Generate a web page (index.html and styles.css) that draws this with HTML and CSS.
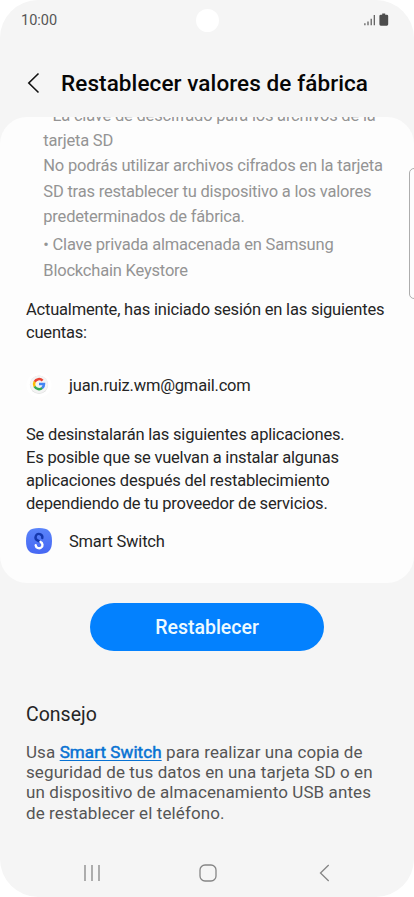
FILE: index.html
```html
<!DOCTYPE html>
<html lang="es">
<head>
<meta charset="utf-8">
<title>Restablecer valores de fábrica</title>
<link rel="stylesheet" href="styles.css">
</head>
<body>
<main class="phone">
  <header class="status">
    <time class="clock">10:00</time>
    <span class="camera"></span>
    <svg class="status-icons" width="26" height="14" viewBox="0 0 26 14">
      <path d="M.9 10.300v2M4 8.600v3.700M7.200 5.800v6.500M10.300 2.100v10.200" stroke="#555" stroke-width="1.200"/>
      <path d="M18.200.5h3v1.200h1.600q1.400 0 1.400 1.400v8.200q0 1.400-1.400 1.400h-6q-1.400 0-1.400-1.400V3.100q0-1.400 1.400-1.400h1.400z" fill="#4c4c4c"/>
    </svg>
  </header>
  <div class="titlebar">
    <svg width="14" height="22" viewBox="0 0 14 22"><path d="M11.500 1.500 1.800 11l9.700 9.500" fill="none" stroke="#111" stroke-width="1.600"/></svg>
    <h1>Restablecer valores de fábrica</h1>
  </div>
  <section class="card">
    <div class="details">
      <p class="key">• La clave de descifrado para los archivos de la<br>tarjeta SD<br>No podrás utilizar archivos cifrados en la tarjeta<br>SD tras restablecer tu dispositivo a los valores<br>predeterminados de fábrica.</p>
      <p>• Clave privada almacenada en Samsung<br>Blockchain Keystore</p>
    </div>
    <p class="body accounts">Actualmente, has iniciado sesión en las siguientes<br>cuentas:</p>
    <div class="row account">
      <svg width="26" height="26" viewBox="0 0 26 26">
        <circle cx="13" cy="13" r="12.500" fill="#fff"/>
        <circle cx="13" cy="12.800" r="9.200" fill="#e2e2e2"/>
        <circle cx="13" cy="12.300" r="8.900" fill="#f4f4f4"/>
        <g fill="none" stroke-width="2.500" transform="translate(0 -.7)">
          <path d="M16.600 9.300A5 5 0 0 0 8.600 10.500" stroke="#e94335"/>
          <path d="M8.700 10.300A5 5 0 0 0 8.700 15.300" stroke="#fbbc05"/>
          <path d="M8.600 15.200A5 5 0 0 0 16.300 16.600" stroke="#34a853"/>
          <path d="M13 12.800h5A5 5 0 0 1 16.200 16.700" stroke="#4285f4"/>
        </g>
      </svg>
      <span>juan.ruiz.wm@gmail.com</span>
    </div>
    <p class="body apps">Se desinstalarán las siguientes aplicaciones.<br>Es posible que se vuelvan a instalar algunas<br>aplicaciones después del restablecimiento<br>dependiendo de tu proveedor de servicios.</p>
    <div class="row app">
      <svg width="26" height="26" viewBox="0 0 26 26">
        <defs><linearGradient id="sw" x1="0" y1="0" x2="0" y2="1"><stop stop-color="#5a84fa"/><stop offset="1" stop-color="#4667f3"/></linearGradient></defs>
        <path d="M13 0C22.500 0 26 3.500 26 13s-3.500 13-13 13S0 22.500 0 13 3.500 0 13 0z" fill="url(#sw)"/>
        <g fill="none" stroke-width="2.400" stroke-linecap="round">
          <path d="M16.300 10A3.400 3.400 0 1 0 11.500 12.400L14.500 13.800" stroke="#1538ae"/>
          <path d="M14.500 13.800A3.400 3.400 0 1 1 9.700 17.300" stroke="#fff"/>
        </g>
      </svg>
      <span>Smart Switch</span>
    </div>
  </section>
  <button class="reset">Restablecer</button>
  <section class="tip">
    <h2>Consejo</h2>
    <p>Usa <a href="#">Smart Switch</a> para realizar una copia de<br>seguridad de tus datos en una tarjeta SD o en<br>un dispositivo de almacenamiento USB antes<br>de restablecer el teléfono.</p>
  </section>
  <nav class="nav">
    <svg width="18" height="18" viewBox="0 0 18 18"><path d="M2 1v16M9 1v16M16 1v16"/></svg>
    <svg width="18" height="18" viewBox="0 0 18 18"><rect x="1" y="1" width="16" height="16" rx="5"/></svg>
    <svg width="18" height="18" viewBox="0 0 18 18"><path d="M13.700 1 5.500 9l8.200 8"/></svg>
  </nav>
  <span class="edge-handle"></span>
</main>
</body>
</html>
```
FILE: styles.css
```css
* { box-sizing: border-box; }
body { margin: 0; background: #fff; font-family: Roboto, "Liberation Sans", sans-serif; }
h1, h2, p { margin: 0; font-weight: 400; white-space: nowrap; }
svg { display: block; flex: none; }
.phone {
  position: relative;
  display: flex;
  flex-direction: column;
  width: 414px;
  height: 897px;
  overflow: hidden;
  background: #f5f5f5;
  border-radius: 38px;
}
.status {
  display: grid;
  grid-template-columns: 1fr 23px 1fr;
  align-items: center;
  height: 40px;
  padding: 0 25px 0 21px;
  flex: none;
}
.clock { font-size: 14.5px; color: #555; }
.camera { width: 23px; height: 23px; border-radius: 50%; background: #fff; margin-left: 2px; }
.status-icons { justify-self: end; margin-right: -1px; }
.titlebar {
  display: flex;
  align-items: center;
  gap: 20px;
  height: 77px;
  padding: 8px 0 0 27px;
  flex: none;
}
.titlebar h1 { font-size: 22.5px; font-weight: 500; letter-spacing: .09px; color: #060606; }
.card {
  height: 466px;
  flex: none;
  overflow: hidden;
  background: #fdfdfd;
  border-radius: 27px;
  padding: 0 26px;
  font-size: 16.5px;
  letter-spacing: -.2px;
  color: #252525;
}
.details {
  margin: -14.300px 0 0 17.300px;
  line-height: 25.300px;
  color: #949494;
}
.key { margin-bottom: 3.200px; }
.body { line-height: 23px; }
.accounts { margin-top: 14.800px; }
.row { display: flex; align-items: center; gap: 17px; height: 26px; }
.account { margin-top: 28.300px; }
.apps { margin-top: 25px; }
.app { margin-top: 13.500px; }
.app svg { margin-top: -1px; }
.reset {
  width: 234px;
  height: 48px;
  flex: none;
  margin: 20px 0 0 90px;
  padding: 1px 0 0;
  border: 0;
  border-radius: 24px;
  background: #0381fe;
  color: #eefaff;
  font: 500 19.500px Roboto, sans-serif;
}
.tip { padding: 52px 26px 0; height: 196px; flex: none; }
.tip h2 { font-size: 19.500px; line-height: 24px; color: #252525; }
.tip p { margin-top: 14.600px; font-size: 17px; letter-spacing: .1px; line-height: 20.400px; color: #555; }
.tip a {
  color: #0872d3;
  -webkit-text-stroke: .5px #0872d3;
  letter-spacing: .08px;
  text-decoration: underline;
  text-decoration-thickness: 1px;
  text-underline-offset: 2px;
}
.nav {
  display: flex;
  justify-content: space-between;
  padding: 16.500px 81px 0 83px;
}
.nav svg { fill: none; stroke: #858585; stroke-width: 1.300; }
.edge-handle {
  position: absolute;
  top: 168px;
  left: 409px;
  width: 12px;
  height: 131px;
  border: 1px solid #adadad;
  border-radius: 5px;
  background: #fdfdfd;
}
```
